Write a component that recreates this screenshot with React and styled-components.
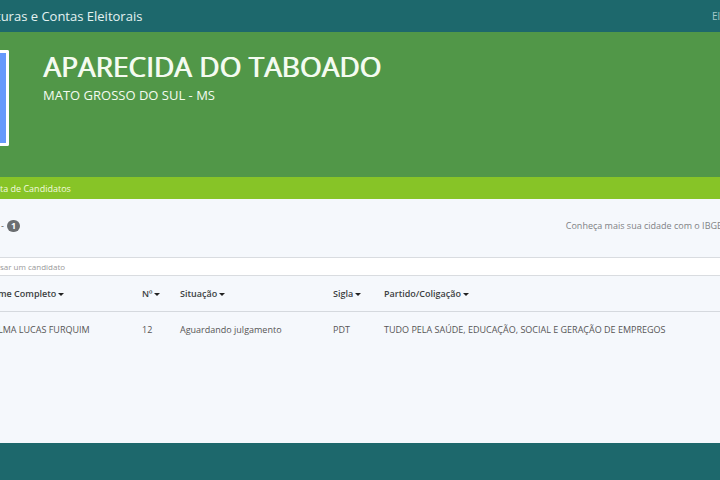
import React from "react";
import styled, { createGlobalStyle } from "styled-components";

const columns = [
  { key: "nome", label: "me Completo", width: "136px" },
  { key: "numero", label: "Nº", width: "38px" },
  { key: "situacao", label: "Situação", width: "153px" },
  { key: "sigla", label: "Sigla", width: "51px" },
  { key: "partido", label: "Partido/Coligação" },
];

const candidatos = [
  {
    nome: "LMA LUCAS FURQUIM",
    numero: "12",
    situacao: "Aguardando julgamento",
    sigla: "PDT",
    partido: "TUDO PELA SAÚDE, EDUCAÇÃO, SOCIAL E GERAÇÃO DE EMPREGOS",
  },
];

function App() {
  return (
    <>
      <GlobalStyle />
      <Page>
        <TopBar>
          <Brand href="#">turas e Contas Eleitorais</Brand>
          <TopLink href="#">El</TopLink>
        </TopBar>
        <Hero>
          <Flag />
          <HeroText>
            <City>APARECIDA DO TABOADO</City>
            <State>MATO GROSSO DO SUL - MS</State>
          </HeroText>
        </Hero>
        <Breadcrumb>
          <a href="#">ta de Candidatos</a>
        </Breadcrumb>
        <Content>
          <Summary>
            <Count>
              - <Badge>1</Badge>
            </Count>
            <CityLink href="#">Conheça mais sua cidade com o IBGE</CityLink>
          </Summary>
          <Search
            type="text"
            aria-label="Pesquisar um candidato"
            placeholder="sar um candidato"
          />
          <Table>
            <colgroup>
              {columns.map((column) => (
                <Col key={column.key} $width={column.width} />
              ))}
            </colgroup>
            <thead>
              <tr>
                {columns.map((column) => (
                  <HeadCell key={column.key} scope="col">
                    <SortButton type="button">
                      {column.label}
                      <Caret />
                    </SortButton>
                  </HeadCell>
                ))}
              </tr>
            </thead>
            <tbody>
              {candidatos.map((candidato) => (
                <tr key={candidato.numero}>
                  {columns.map((column) => (
                    <Cell key={column.key}>{candidato[column.key]}</Cell>
                  ))}
                </tr>
              ))}
            </tbody>
          </Table>
        </Content>
        <Footer />
      </Page>
    </>
  );
}

export default App;

const GlobalStyle = createGlobalStyle`
  * {
    box-sizing: border-box;
  }
  body {
    margin: 0;
    font-family: "Open Sans", "Noto Sans", sans-serif;
    font-size: 9px;
    color: #555;
    background-color: #f5f8fc;
  }
  a {
    color: inherit;
    text-decoration: none;
  }
`;

const Page = styled.div`
  display: flex;
  flex-direction: column;
  min-height: 100vh;
  overflow: hidden;
`;

const TopBar = styled.header`
  display: flex;
  justify-content: space-between;
  align-items: center;
  height: 32px;
  margin-left: -4px;
  background-color: #1d686c;
`;
const Brand = styled.a`
  && {
    color: #e4f3f2;
  }
  font-size: 13px;
`;
const TopLink = styled.a`
  && {
    color: #a5c8c9;
  }
  font-size: 10px;
`;

const Hero = styled.section`
  display: flex;
  align-items: flex-start;
  gap: 34px;
  padding: 18px 0 31px;
  background-color: #519748;
`;
const Flag = styled.div`
  width: 9px;
  height: 96px;
  border: 3px solid #fff;
  border-left: 0;
  border-radius: 0 2px 2px 0;
  background-color: #6699fb;
`;
const HeroText = styled.div`
  color: #f4fbf0;
`;
const City = styled.h1`
  margin: 0;
  font-size: 28px;
  font-weight: 400;
  line-height: 32px;
  text-shadow: 1px 0 0 #f4fbf0;
`;
const State = styled.p`
  margin: 5px 0 0;
  font-size: 13px;
  line-height: 16px;
`;

const Breadcrumb = styled.nav`
  display: flex;
  align-items: center;
  height: 22px;
  color: #f2fadf;
  background-color: #87c427;
`;

const Content = styled.main`
  flex: 1;
`;
const Summary = styled.div`
  display: flex;
  justify-content: space-between;
  align-items: center;
  height: 53px;
  margin: 0 -2px 5px 0;
`;
const Count = styled.div`
  display: flex;
  align-items: center;
  gap: 3px;
  padding-left: 1px;
`;
const Badge = styled.span`
  padding: 0 4px;
  border-radius: 6px;
  color: #fff;
  background-color: #6b6e71;
  font-weight: 700;
  line-height: 12px;
`;
const CityLink = styled.a`
  && {
    color: #808285;
  }
`;
const Search = styled.input`
  display: block;
  width: 100%;
  height: 19px;
  padding: 0;
  border: solid #d9dce0;
  border-width: 1px 0;
  background-color: #fff;
  font-family: inherit;
  font-size: 8px;
  &::placeholder {
    color: #999;
  }
`;

const Table = styled.table`
  width: calc(100% + 2px);
  margin-left: -2px;
  table-layout: fixed;
  border-collapse: collapse;
`;
const Col = styled.col`
  width: ${(props) => props.$width || "auto"};
`;
const HeadCell = styled.th`
  height: 35px;
  padding: 0 0 0 8px;
  border-bottom: 1px solid #d5d9de;
  text-align: left;
  &:first-child {
    padding-left: 0;
  }
`;
const SortButton = styled.button`
  display: flex;
  align-items: center;
  gap: 2px;
  padding: 0;
  border: 0;
  background: none;
  color: #3c3f42;
  font-family: inherit;
  font-size: 9px;
  font-weight: 600;
  cursor: pointer;
`;
const Caret = styled.span`
  margin-top: 3px;
  border: solid transparent;
  border-width: 3px 3px 0;
  border-top-color: #222;
`;
const Cell = styled.td`
  height: 36px;
  padding: 0 0 0 8px;
  white-space: nowrap;
  &:first-child {
    padding-left: 0;
  }
`;

const Footer = styled.footer`
  height: 37px;
  background-color: #1d686c;
`;
